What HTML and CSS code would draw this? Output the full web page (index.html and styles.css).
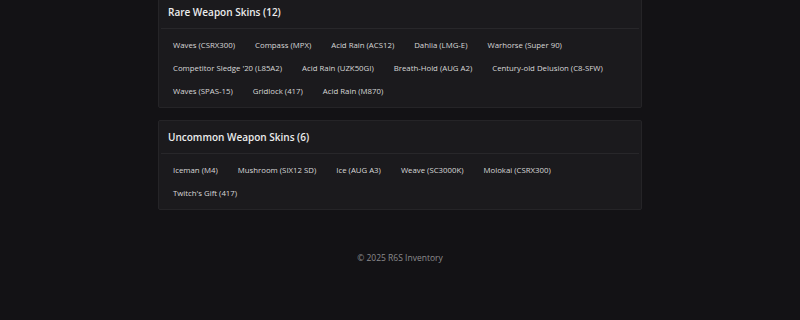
FILE: index.html
```html
<!DOCTYPE html>
<html lang="en">
<head>
  <meta charset="UTF-8" />
  <meta name="viewport" content="width=device-width, initial-scale=1.0"/>
  <title>R6S Inventory | Skins</title>
  <link rel="stylesheet" href="styles.css">
</head>
<body>

<main class="inventory">
  <section class="rarity-card">
    <h2 class="rarity-title">Rare Weapon Skins (12)</h2>
    <div class="skin-list">
      <span class="skin">Waves (CSRX300)</span>
      <span class="skin">Compass (MPX)</span>
      <span class="skin">Acid Rain (ACS12)</span>
      <span class="skin">Dahlia (LMG-E)</span>
      <span class="skin">Warhorse (Super 90)</span>
      <span class="skin">Competitor Sledge '20 (L85A2)</span>
      <span class="skin">Acid Rain (UZK50GI)</span>
      <span class="skin">Breath-Hold (AUG A2)</span>
      <span class="skin">Century-old Delusion (C8-SFW)</span>
      <span class="skin">Waves (SPAS-15)</span>
      <span class="skin">Gridlock (417)</span>
      <span class="skin">Acid Rain (M870)</span>
    </div>
  </section>

  <section class="rarity-card">
    <h2 class="rarity-title">Uncommon Weapon Skins (6)</h2>
    <div class="skin-list">
      <span class="skin">Iceman (M4)</span>
      <span class="skin">Mushroom (SIX12 SD)</span>
      <span class="skin">Ice (AUG A3)</span>
      <span class="skin">Weave (SC3000K)</span>
      <span class="skin">Molokai (CSRX300)</span>
      <span class="skin">Twitch's Gift (417)</span>
    </div>
  </section>
</main>

<footer>
  <p>&copy; 2025 R6S Inventory</p>
</footer>

</body>
</html>
```

FILE: styles.css
```css
body {
  font-family: "Open Sans", "Liberation Sans", sans-serif;
  margin: 0;
  background-color: #131215; /* near-black page */
  color: #d2d2d2;
}

.inventory {
  width: 484px;
  margin: -5px auto 0;
}

.rarity-card {
  background-color: #1b1a1d;
  border: 1px solid #252427;
  border-radius: 2px;
  margin-bottom: 12px;
}

.rarity-title {
  margin: 0 2px;
  padding: 10px 7px 9px;
  font-size: 10px;
  line-height: 13px;
  font-weight: 600;
  color: #ececec;
  border-bottom: 1px solid #28272a;
}

.skin-list {
  display: flex;
  flex-wrap: wrap;
  padding: 5px 4px 4px;
}

.skin {
  padding: 5px 10px;
  font-size: 7.8px;
  line-height: 13px;
  font-weight: 500;
  color: #d8d8d8;
}

footer {
  text-align: center;
  padding-top: 30px;
}

footer p {
  margin: 0;
  font-size: 8.5px;
  line-height: 12px;
  color: #8b8b8d;
}
```
